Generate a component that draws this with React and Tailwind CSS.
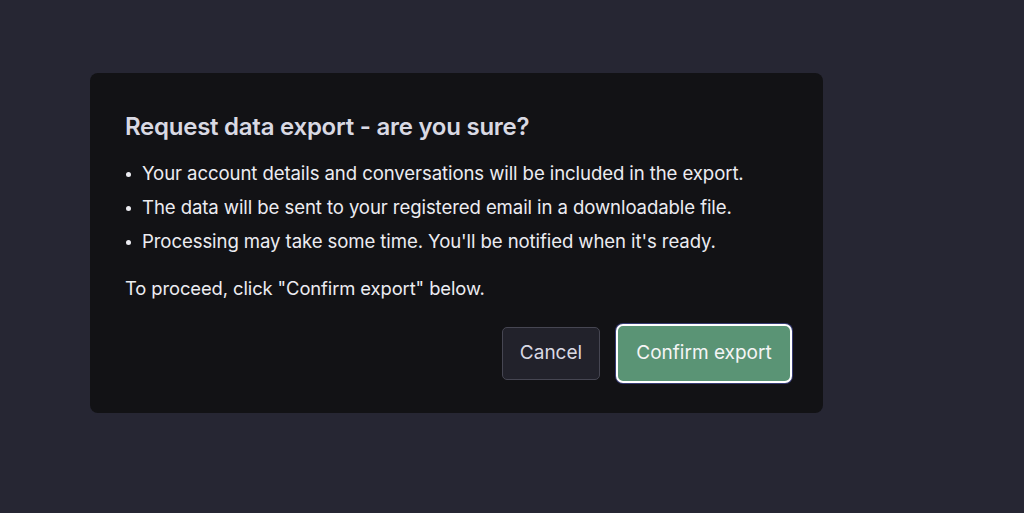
export default function App() {
  const items = [
    "Your account details and conversations will be included in the export.",
    "The data will be sent to your registered email in a downloadable file.",
    "Processing may take some time. You'll be notified when it's ready.",
  ];
  return (
    <div
      className="w-[1024px] h-[513px] bg-[#262633] pt-[73px] pl-[90px] overflow-hidden"
      style={{ fontFamily: "Inter, 'Noto Sans', sans-serif" }}
    >
      <div className="w-[733px] h-[340px] bg-[#121215] rounded-[8px] pt-[40px] pl-[35px] pr-[31px] flex flex-col">
        <h2 className="text-[24px] leading-[28px] font-semibold text-[#d9d9e3] tracking-[-0.25px]">
          Request data export - are you sure?
        </h2>
        <ul className="mt-[16px] flex flex-col">
          {items.map((t) => (
            <li key={t} className="flex items-center h-[34px] text-[18.6px] text-[#ececf1] tracking-[-0.1px]">
              <span className="w-[5px] h-[5px] rounded-full bg-[#ececf1] ml-[1px] mr-[11px]" />
              <span>{t}</span>
            </li>
          ))}
        </ul>
        <p className="mt-[13px] h-[34px] flex items-center text-[18.4px] text-[#ececf1] tracking-[-0.1px]">
          To proceed, click "Confirm export" below.
        </p>
        <div className="mt-[18px] flex justify-end items-center gap-[16px]">
          <button className="h-[53px] w-[98px] rounded-[5px] border border-[#464652] bg-[#22222b] text-[19px] text-[#d9d9e3] flex items-center justify-center">
            Cancel
          </button>
          <button className="h-[59px] w-[176px] rounded-[7px] bg-[#5a9475] text-[19px] text-[#f5f5f5] flex items-center justify-center border-2 border-white ring-1 ring-[#383c74]">
            Confirm export
          </button>
        </div>
      </div>
    </div>
  );
}
